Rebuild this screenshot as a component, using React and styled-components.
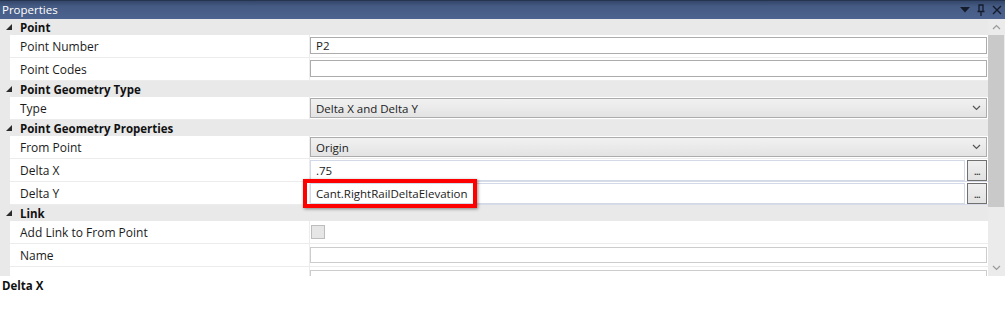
import React from "react";
import styled, { createGlobalStyle } from "styled-components";

const Global = createGlobalStyle`
  html, body { margin: 0; padding: 0; background: #ffffff; }
  body { font-family: "Open Sans", "Noto Sans", sans-serif; font-size: 11.5px; color: #1b1b1b; }
  * { box-sizing: border-box; }
`;

const Panel = styled.div`
  width: 1005px;
  height: 310px;
  display: flex;
  flex-direction: column;
  background: #ffffff;
`;

const TitleBar = styled.div`
  height: 19px;
  flex: 0 0 19px;
  display: flex;
  align-items: center;
  justify-content: space-between;
  padding: 0 3px 0 2px;
  background: linear-gradient(to bottom, #34476b 0%, #455b83 30%, #4c6390 100%);
  border-top: 1px solid #26354f;
`;

const Title = styled.span`
  color: #ffffff;
  font-size: 11.5px;
  line-height: 18px;
`;

const TitleIcons = styled.div`
  display: flex;
  align-items: center;
  gap: 7px;
`;

const Body = styled.div`
  height: 257px;
  flex: 0 0 257px;
  display: flex;
  overflow: hidden;
`;

const Grid = styled.div`
  flex: 1;
  display: flex;
  flex-direction: column;
  overflow: hidden;
  background: #e9e9e9;
`;

const HeaderRow = styled.div`
  height: 16px;
  flex: 0 0 16px;
  display: flex;
  align-items: center;
  background: #e9e9e9;
  font-weight: 700;
  color: #111111;
`;

const Expander = styled.span`
  width: 20px;
  display: flex;
  justify-content: flex-start;
  padding-left: 6px;
`;

const Row = styled.div`
  height: 23px;
  flex: 0 0 23px;
  display: grid;
  grid-template-columns: 10px 300px 1fr;
`;

const Gutter = styled.div`
  background: #e9e9e9;
`;

const NameCell = styled.div`
  display: flex;
  align-items: center;
  padding-left: 10px;
  background: #ffffff;
  font-size: 12px;
  border-right: 1px solid #ececec;
  border-bottom: 1px solid #ececec;
  white-space: nowrap;
  overflow: hidden;
`;

const ValueCell = styled.div`
  position: relative;
  display: flex;
  align-items: stretch;
  background: #ffffff;
  padding: ${(p) => p.$pad || "0"};
  padding-right: 1px;
  border-bottom: 1px solid ${(p) => p.$line || "#ececec"};
`;

const TextBox = styled.div`
  flex: 1;
  display: flex;
  align-items: center;
  padding-left: 5px;
  background: #ffffff;
  border: 1px solid ${(p) => p.$border || "#acacac"};
  white-space: nowrap;
  overflow: hidden;
`;

const Combo = styled.div`
  flex: 1;
  display: flex;
  align-items: center;
  justify-content: space-between;
  padding: 0 5px 0 5px;
  background: linear-gradient(to bottom, #f1f1f1 0%, #e9e9e9 60%, #e3e3e3 100%);
  border: 1px solid #acacac;
`;

const EllipsisButton = styled.div`
  width: 20px;
  flex: 0 0 20px;
  margin-left: 2px;
  display: flex;
  align-items: flex-end;
  justify-content: center;
  padding-bottom: 4px;
  background: linear-gradient(to bottom, #efefef, #e2e2e2);
  border: 1px solid #707070;
  font-size: 9px;
  line-height: 8px;
  font-weight: 700;
  color: #3a3a3a;
  letter-spacing: -0.5px;
`;

const CheckBox = styled.div`
  width: 14px;
  height: 14px;
  margin: 4px 0 0 1px;
  background: #e6e6e6;
  border: 1px solid #bdbdbd;
`;

const Highlight = styled.div`
  position: absolute;
  left: -7px;
  top: -3px;
  width: 174px;
  height: 29px;
  border: 4px solid #ff0000;
  box-shadow: 1px 1px 3px rgba(0, 0, 0, 0.45);
  pointer-events: none;
`;

const ScrollBar = styled.div`
  width: 17px;
  flex: 0 0 17px;
  display: flex;
  flex-direction: column;
  background: #ebebeb;
`;

const ScrollArrow = styled.div`
  height: 16px;
  flex: 0 0 16px;
  display: flex;
  align-items: center;
  justify-content: center;
`;

const Thumb = styled.div`
  height: 172px;
  flex: 0 0 172px;
  margin: 0 1px 0 0;
  background: #c9c9c9;
`;

const Track = styled.div`
  flex: 1;
`;

const Description = styled.div`
  flex: 1;
  padding: 2px 2px;
  font-weight: 700;
  font-size: 11.5px;
  color: #111111;
  line-height: 16px;
`;

const Triangle = () => (
  <svg width="6" height="6" viewBox="0 0 6 6">
    <polygon points="6,0 6,6 0,6" fill="#2b2b2b" />
  </svg>
);

const Chevron = ({ up, color = "#555" }) => (
  <svg width="9" height="6" viewBox="0 0 9 6">
    <polyline
      points={up ? "1,5 4.5,1.5 8,5" : "1,1 4.5,4.5 8,1"}
      fill="none"
      stroke={color}
      strokeWidth="1.2"
    />
  </svg>
);

const Section = ({ title, children }) => (
  <>
    <HeaderRow>
      <Expander>
        <Triangle />
      </Expander>
      {title}
    </HeaderRow>
    {children}
  </>
);

const Prop = ({ name, children, pad, line }) => (
  <Row>
    <Gutter />
    <NameCell>{name}</NameCell>
    <ValueCell $pad={pad} $line={line}>
      {children}
    </ValueCell>
  </Row>
);

export default function App() {
  return (
    <>
      <Global />
      <Panel>
        <TitleBar>
          <Title>Properties</Title>
          <TitleIcons>
            <svg width="10" height="6" viewBox="0 0 10 6">
              <polygon points="0,0 10,0 5,5.5" fill="#141c2c" />
            </svg>
            <svg width="8" height="12" viewBox="0 0 8 12">
              <path d="M2 1 H6 V7.5 H2 Z M0.5 7.5 H7.5 M4 7.5 V12" fill="none" stroke="#141c2c" strokeWidth="1.3" />
            </svg>
            <svg width="10" height="10" viewBox="0 0 10 10">
              <path d="M1 1 L9 9 M9 1 L1 9" stroke="#141c2c" strokeWidth="1.4" />
            </svg>
          </TitleIcons>
        </TitleBar>
        <Body>
          <Grid>
            <Section title="Point">
              <Prop name="Point Number" pad="2px 0 3px 0">
                <TextBox>P2</TextBox>
              </Prop>
              <Prop name="Point Codes" pad="2px 0 3px 0">
                <TextBox />
              </Prop>
            </Section>
            <Section title="Point Geometry Type">
              <Prop name="Type" pad="1px 0 1px 0">
                <Combo>
                  Delta X and Delta Y
                  <Chevron />
                </Combo>
              </Prop>
            </Section>
            <Section title="Point Geometry Properties">
              <Prop name="From Point" pad="1px 0 1px 0">
                <Combo>
                  Origin
                  <Chevron />
                </Combo>
              </Prop>
              <Prop name="Delta X" pad="1px 0 0 0" line="#d8dce8">
                <TextBox $border="#d4d9e7">.75</TextBox>
                <EllipsisButton>...</EllipsisButton>
              </Prop>
              <Prop name="Delta Y" pad="1px 0 0 0" line="#d8dce8">
                <TextBox $border="#d4d9e7">Cant.RightRailDeltaElevation</TextBox>
                <EllipsisButton>...</EllipsisButton>
                <Highlight />
              </Prop>
            </Section>
            <Section title="Link">
              <Prop name="Add Link to From Point">
                <CheckBox />
              </Prop>
              <Prop name="Name" pad="3px 0 3px 0">
                <TextBox $border="#cccccc" />
              </Prop>
              <Prop name="" pad="3px 0 3px 0">
                <TextBox $border="#cccccc" />
              </Prop>
            </Section>
          </Grid>
          <ScrollBar>
            <ScrollArrow>
              <Chevron up color="#9a9a9a" />
            </ScrollArrow>
            <Thumb />
            <Track />
            <ScrollArrow>
              <Chevron color="#9a9a9a" />
            </ScrollArrow>
          </ScrollBar>
        </Body>
        <Description>Delta X</Description>
      </Panel>
    </>
  );
}
